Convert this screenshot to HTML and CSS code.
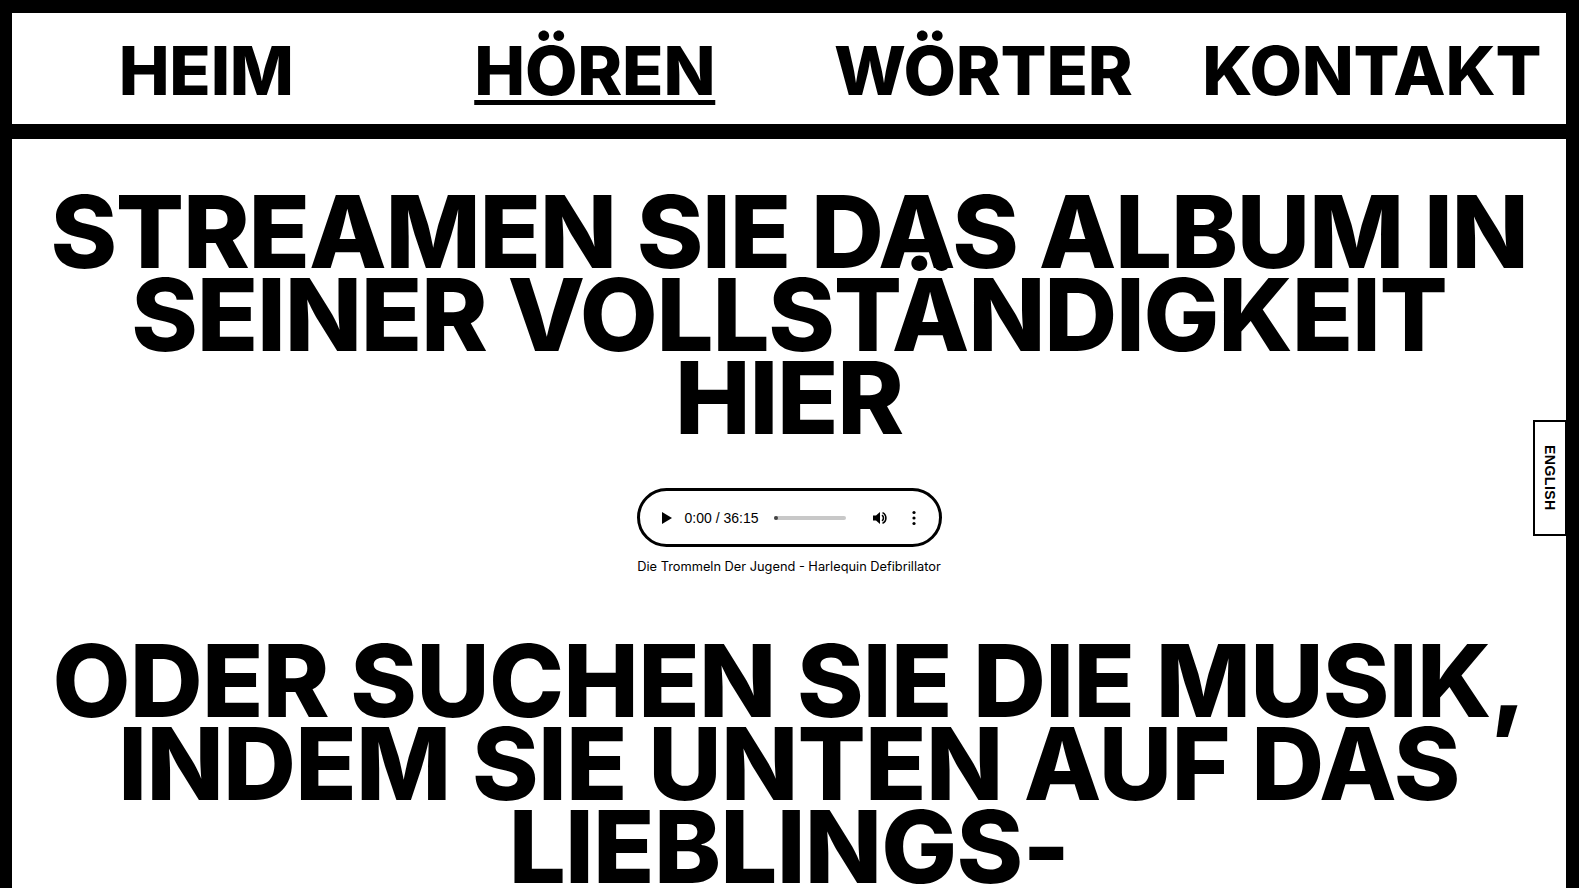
FILE: index.html
```html
<!DOCTYPE html>
<html lang="de">
<head>
<meta charset="utf-8">
<title>Hören</title>
<link rel="stylesheet" href="styles.css">
</head>
<body>
<div class="frame">
  <nav class="nav">
    <a class="nav-item" href="#">HEIM</a>
    <a class="nav-item active" href="#">HÖREN</a>
    <a class="nav-item" href="#">WÖRTER</a>
    <a class="nav-item" href="#">KONTAKT</a>
  </nav>
  <main class="content">
    <h1 class="headline">STREAMEN SIE DAS ALBUM IN SEINER VOLLSTÄNDIGKEIT HIER</h1>
    <div class="player-wrap">
      <div class="player">
        <svg class="play" width="10" height="12" viewBox="0 0 10 12"><path d="M0 0 L10 6 L0 12 Z" fill="#000"/></svg>
        <span class="time">0:00 / 36:15</span>
        <div class="track"><span class="knob"></span></div>
        <svg class="vol" width="16" height="16" viewBox="0 0 16 16">
          <path d="M1 5.5 H4 L8 2 V14 L4 10.5 H1 Z" fill="#000"/>
          <path d="M10 5.2 A3.4 3.4 0 0 1 10 10.8" fill="none" stroke="#000" stroke-width="1.6"/>
          <path d="M10.5 2.6 A6 6 0 0 1 10.5 13.4" fill="none" stroke="#000" stroke-width="1.6"/>
        </svg>
        <svg class="dots" width="4" height="16" viewBox="0 0 4 16"><circle cx="2" cy="2.5" r="1.6"/><circle cx="2" cy="8" r="1.6"/><circle cx="2" cy="13.5" r="1.6"/></svg>
      </div>
      <p class="caption">Die Trommeln Der Jugend - Harlequin Defibrillator</p>
    </div>
    <h2 class="headline">ODER SUCHEN SIE DIE MUSIK, INDEM SIE UNTEN AUF DAS LIEBLINGS-STREAMINGSYMBOL KLICKEN</h2>
  </main>
</div>
<a class="lang" href="#">ENGLISH</a>
</body>
</html>
```

FILE: styles.css
```css
html, body {
  margin: 0;
  padding: 0;
  background: #fff;
}
body {
  font-family: "Inter", "Liberation Sans", sans-serif;
  color: #000;
  overflow: hidden;
  height: 888px;
}
.frame {
  border-top: 13px solid #000;
  border-left: 12px solid #000;
  border-right: 13px solid #000;
  min-height: 875px;
}
.nav {
  display: grid;
  grid-template-columns: repeat(4, 1fr);
  height: 111px;
  border-bottom: 15px solid #000;
  align-items: start;
}
.nav-item {
  justify-self: center;
  color: #000;
  text-decoration: none;
  font-family: "Inter", "Liberation Sans", sans-serif;
  font-weight: 800;
  font-size: 68px;
  line-height: 68px;
  margin-top: 23px;
  letter-spacing: -0.2px;
}
.nav-item.active {
  text-decoration: underline;
  text-decoration-thickness: 5px;
  text-underline-offset: 5px;
}
.content {
  padding: 51px 20px 0;
  text-align: center;
}
.headline {
  margin: 0;
  font-family: "Inter", "Liberation Sans", sans-serif;
  font-weight: 800;
  font-size: 101px;
  line-height: 83px;
  letter-spacing: -1.25px;
}
h2.headline {
  letter-spacing: -0.75px;
}
.player-wrap {
  display: flex;
  flex-direction: column;
  align-items: center;
  margin-top: 49px;
  margin-bottom: 64px;
}
.player {
  box-sizing: border-box;
  width: 305px;
  height: 59px;
  border: 3px solid #000;
  border-radius: 30px;
  display: flex;
  align-items: center;
  padding: 0 22px 0 22px;
  font-family: "Liberation Sans", "Inter", sans-serif;
  font-size: 14px;
}
.play {
  margin-right: 13px;
}
.time {
  color: #000;
  margin-right: 16px;
  white-space: nowrap;
}
.track {
  position: relative;
  width: 72px;
  height: 4px;
  background: #c8c8c8;
  border-radius: 2px;
}
.knob {
  position: absolute;
  left: 0;
  top: 0;
  width: 4px;
  height: 4px;
  border-radius: 50%;
  background: #444;
}
.vol {
  margin-left: 26px;
}
.dots {
  margin-left: 24px;
}
.caption {
  margin: 12px 0 0;
  font-family: "Inter", "Liberation Sans", sans-serif;
  font-size: 12.8px;
  line-height: 16px;
}
.lang {
  position: fixed;
  right: 12px;
  top: 420px;
  box-sizing: border-box;
  width: 34px;
  height: 116px;
  border: 2px solid #000;
  background: #fff;
  display: flex;
  align-items: center;
  justify-content: center;
  writing-mode: vertical-rl;
  color: #000;
  text-decoration: none;
  font-family: "Liberation Sans", Arial, sans-serif;
  font-weight: 700;
  font-size: 14px;
  letter-spacing: 0.5px;
}
```
